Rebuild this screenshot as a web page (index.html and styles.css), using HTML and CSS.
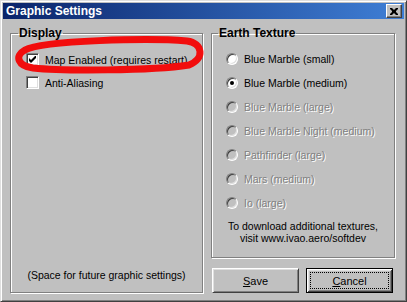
FILE: index.html
```html
<!DOCTYPE html>
<html lang="en">
<head>
    <meta charset="UTF-8">
    <meta name="viewport" content="width=device-width, initial-scale=1.0">
    <title>Graphic Settings</title>
    <link rel="stylesheet" href="styles.css">
</head>
<body>

    <div class="window">
        <div class="titleBar">
            <span class="titleText">Graphic Settings</span>
            <span class="closeBtn">
                <svg width="8" height="7" viewBox="0 0 8 7"><path d="M0 0h2l2 2 2-2h2v1L6 3v1l2 2v1H6L4 5 2 7H0V6l2-2V3L0 1z" fill="#000"/></svg>
            </span>
        </div>

        <div class="content">
            <!-- left column -->
            <fieldset class="group displayGroup">
                <legend>Display</legend>
                <div class="row">
                    <span class="checkbox">
                        <svg width="7" height="7" viewBox="0 0 7 7"><path d="M0 2l2 2 5-5v3L2 7 0 5z" fill="#000"/></svg>
                    </span>
                    <span>Map Enabled (requires restart)</span>
                </div>
                <div class="row">
                    <span class="checkbox"></span>
                    <span>Anti-Aliasing</span>
                </div>
                <p class="spaceNote">(Space for future graphic settings)</p>
            </fieldset>

            <!-- right column -->
            <div class="rightCol">
                <fieldset class="group textureGroup">
                    <legend>Earth Texture</legend>
                    <div class="row"><span class="radio"></span><span>Blue Marble (small)</span></div>
                    <div class="row"><span class="radio checked"></span><span>Blue Marble (medium)</span></div>
                    <div class="row disabled"><span class="radio"></span><span>Blue Marble (large)</span></div>
                    <div class="row disabled"><span class="radio"></span><span>Blue Marble Night (medium)</span></div>
                    <div class="row disabled"><span class="radio"></span><span>Pathfinder (large)</span></div>
                    <div class="row disabled"><span class="radio"></span><span>Mars (medium)</span></div>
                    <div class="row disabled"><span class="radio"></span><span>Io (large)</span></div>
                    <p class="downloadNote">To download additional textures,<br>visit www.ivao.aero/softdev</p>
                </fieldset>
                <div class="buttonRow">
                    <button class="btn"><u>S</u>ave</button>
                    <button class="btn default"><span class="focus"><u>C</u>ancel</span></button>
                </div>
            </div>
        </div>

        <!-- red marker drawn over the dialog -->
        <svg class="marker" width="407" height="302" viewBox="0 0 407 302">
            <path d="M24 49 C42 39, 150 37, 186 40 C202 42, 204 58, 188 64 C150 70, 60 70, 32 67 C17 65, 13 55, 24 49 Z" fill="none" stroke="#f20d0d" stroke-width="7"/>
        </svg>
    </div>

</body>
</html>
```

FILE: styles.css
```css
body {
    margin: 0;
    padding: 0;
    font-family: 'Liberation Sans', Arial, sans-serif;
    font-size: 10.5px;
    color: #000;
    background-color: #c0c0c0;
}

.window {
    position: relative;
    box-sizing: border-box;
    width: 407px;
    height: 302px;
    padding: 1px;
    background-color: #c0c0c0;
    border: 1px solid;
    border-color: #dfdfdf #404040 #404040 #dfdfdf;
    box-shadow: inset 1px 1px 0 #fff, inset -1px -1px 0 #808080;
    display: flex;
    flex-direction: column;
}

.titleBar {
    height: 16px;
    margin: 1px 1px 0 1px;
    padding: 0 2px 0 3px;
    background: linear-gradient(to right, #0a246a, #3f7fd6);
    display: flex;
    align-items: center;
    justify-content: space-between;
}

.titleText {
    color: #fff;
    font-weight: bold;
    font-size: 12px;
}

.closeBtn {
    box-sizing: border-box;
    width: 16px;
    height: 14px;
    background-color: #c0c0c0;
    border: 1px solid;
    border-color: #fff #404040 #404040 #fff;
    box-shadow: inset -1px -1px 0 #808080;
    display: flex;
    align-items: center;
    justify-content: center;
}

.content {
    flex: 1;
    display: grid;
    grid-template-columns: 193px 184px;
    column-gap: 8px;
    padding: 7px 9px 7px 8px;
    min-height: 0;
}

.group {
    margin: 0;
    min-width: 0;
    border: 1px solid #808080;
    box-shadow: 1px 1px 0 #fff, inset 1px 1px 0 #fff;
    display: flex;
    flex-direction: column;
}

.group legend {
    font-size: 12px;
    font-weight: bold;
    line-height: 14px;
    padding: 0 1px;
    margin-left: -8px;
}

.displayGroup {
    padding: 8px 4px 10px 15px;
}

.textureGroup {
    flex: 1;
    padding: 7px 4px 0 14px;
}

.row {
    display: flex;
    align-items: center;
    height: 23px;
    gap: 6px;
}

.textureGroup .row {
    height: 24px;
}

.row.disabled {
    color: #808080;
    text-shadow: 1px 1px 0 #fff;
}

.checkbox {
    box-sizing: border-box;
    width: 13px;
    height: 13px;
    background-color: #fff;
    border: 1px solid;
    border-color: #808080 #fff #fff #808080;
    box-shadow: inset 1px 1px 0 #404040, inset -1px -1px 0 #dfdfdf;
    display: flex;
    align-items: center;
    justify-content: center;
}

.radio {
    position: relative;
    box-sizing: border-box;
    width: 12px;
    height: 12px;
    border-radius: 50%;
    background-color: #fff;
    border: 1px solid;
    border-color: #808080 #fff #fff #808080;
    box-shadow: inset 1px 1px 0 #404040, inset -1px -1px 0 #dfdfdf;
}

.disabled .radio {
    background-color: #c0c0c0;
}

.radio.checked::after {
    content: '';
    position: absolute;
    left: 3px;
    top: 3px;
    width: 4px;
    height: 4px;
    border-radius: 50%;
    background-color: #000;
}

.spaceNote {
    margin: auto 0 0 -11px;
    text-align: center;
    line-height: 14px;
}

.downloadNote {
    margin: 5px 0 0 -10px;
    text-align: center;
    line-height: 12px;
}

.rightCol {
    display: flex;
    flex-direction: column;
    gap: 10px;
    min-height: 0;
}

.buttonRow {
    display: flex;
    gap: 7px;
    padding-left: 1px;
}

.btn {
    box-sizing: border-box;
    width: 87px;
    height: 25px;
    padding: 0;
    font-family: 'Liberation Sans', Arial, sans-serif;
    font-size: 11px;
    color: #000;
    background-color: #c0c0c0;
    border: 1px solid;
    border-color: #fff #404040 #404040 #fff;
    box-shadow: inset 1px 1px 0 #dfdfdf, inset -1px -1px 0 #808080;
}

.btn.default {
    border: 1px solid #000;
    box-shadow: inset 1px 1px 0 #fff, inset -1px -1px 0 #404040, inset 2px 2px 0 #dfdfdf, inset -2px -2px 0 #808080;
    display: flex;
    padding: 3px;
}

.focus {
    flex: 1;
    display: flex;
    align-items: center;
    justify-content: center;
    border: 1px dotted #000;
}

.marker {
    position: absolute;
    left: 0;
    top: 0;
    pointer-events: none;
}
```
